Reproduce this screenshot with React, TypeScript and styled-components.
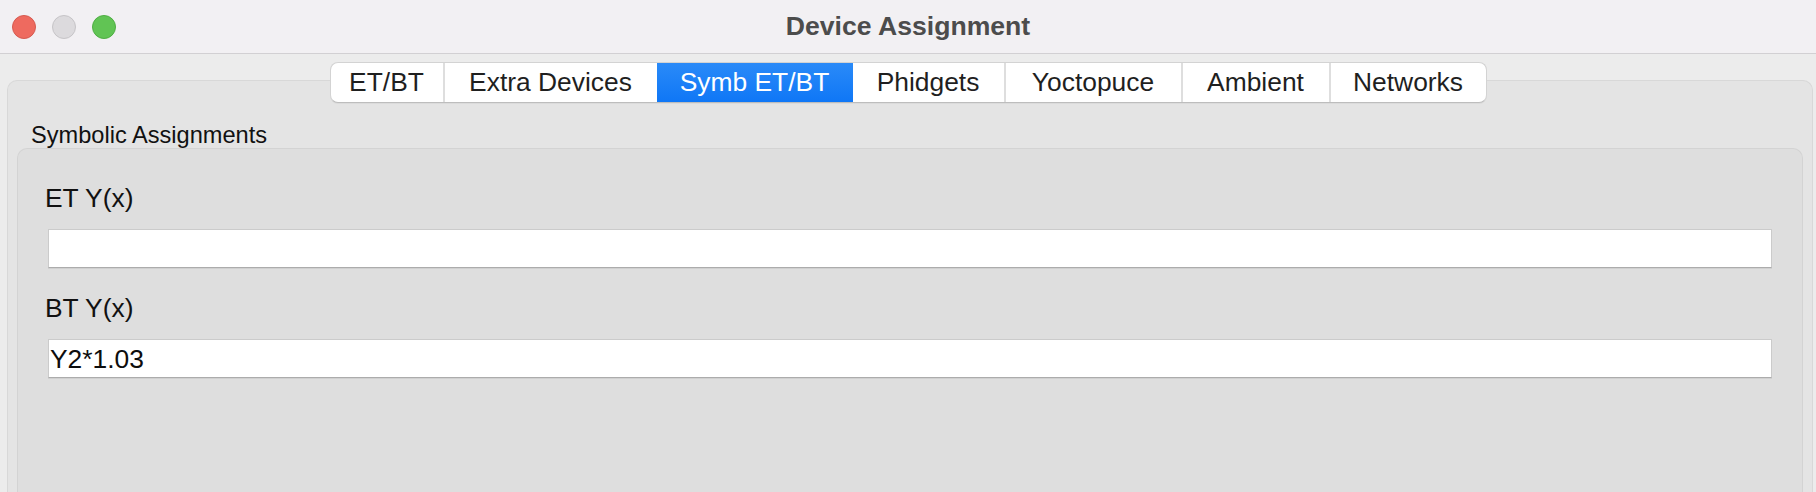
import React from "react";
import styled, { createGlobalStyle } from "styled-components";

const Global = createGlobalStyle`
  html, body { margin: 0; padding: 0; }
  body {
    background: #ececec;
    font-family: "Liberation Sans", Arial, sans-serif;
    overflow: hidden;
  }
`;

const Window = styled.div`
  display: flex;
  flex-direction: column;
  width: 1816px;
  height: 492px;
  background: #ececec;
  overflow: hidden;
`;

const TitleBar = styled.div`
  display: grid;
  grid-template-columns: 1fr auto 1fr;
  align-items: center;
  height: 53px;
  background: #f2f0f3;
  border-bottom: 1px solid #d2d0d3;
  flex-shrink: 0;
`;

const Lights = styled.div`
  display: flex;
  gap: 16px;
  padding-left: 12px;
`;

const Light = styled.span<{ $bg: string; $border: string }>`
  width: 24px;
  height: 24px;
  border-radius: 50%;
  box-sizing: border-box;
  background: ${(p) => p.$bg};
  border: 1px solid ${(p) => p.$border};
`;

const Title = styled.div`
  font-size: 26.6px;
  font-weight: 700;
  color: #4c4c4c;
`;

const TabRow = styled.div`
  display: flex;
  justify-content: center;
  margin-top: 8px;
  position: relative;
  z-index: 1;
  flex-shrink: 0;
`;

const TabBar = styled.div`
  display: flex;
  height: 41px;
  box-sizing: border-box;
  background: #ffffff;
  border: 1px solid #d3d3d3;
  border-bottom-color: #bdbdbd;
  border-radius: 8px;
  overflow: hidden;
  box-shadow: 0 1px 0 rgba(0, 0, 0, 0.04);
`;

const Tab = styled.div<{ $w: number; $active?: boolean; $first?: boolean }>`
  display: flex;
  align-items: center;
  justify-content: center;
  box-sizing: border-box;
  width: ${(p) => p.$w}px;
  font-size: 26.4px;
  color: ${(p) => (p.$active ? "#ffffff" : "#1f1f1f")};
  background: ${(p) =>
    p.$active ? "linear-gradient(#2a8af8, #0f77f6)" : "transparent"};
  border-left: ${(p) =>
    p.$first || p.$active ? "none" : "2px solid #dedede"};
`;

const Pane = styled.div`
  flex: 1;
  margin: -23px 3px 0 7px;
  padding: 41px 9px 0 9px;
  background: #e4e4e4;
  border: 1px solid #d8d8d8;
  border-bottom: none;
  border-radius: 10px 10px 0 0;
  display: flex;
  flex-direction: column;
`;

const GroupTitle = styled.div`
  font-size: 23.6px;
  line-height: 26px;
  color: #111111;
  margin-left: 14px;
`;

const Group = styled.div`
  flex: 1;
  background: #dedede;
  border: 1px solid #d3d3d3;
  border-bottom: none;
  border-radius: 10px 10px 0 0;
  padding: 34px 30px 0 30px;
  display: flex;
  flex-direction: column;
`;

const FieldLabel = styled.div<{ $top?: number }>`
  font-size: 26.4px;
  line-height: 30px;
  color: #111111;
  margin-left: -3px;
  margin-top: ${(p) => p.$top ?? 0}px;
`;

const Input = styled.div`
  margin-top: 16px;
  height: 39px;
  box-sizing: border-box;
  background: #ffffff;
  border: 1px solid #cbcbcb;
  border-bottom-color: #acacac;
  box-shadow: 0 1px 0 rgba(0, 0, 0, 0.06);
  font-size: 26.4px;
  line-height: 37px;
  padding: 1px 0 0 1px;
  color: #0d0d0d;
`;

const tabs = [
  { label: "ET/BT", w: 112 },
  { label: "Extra Devices", w: 214 },
  { label: "Symb ET/BT", w: 196, active: true },
  { label: "Phidgets", w: 151 },
  { label: "Yoctopuce", w: 177 },
  { label: "Ambient", w: 148 },
  { label: "Networks", w: 157 },
];

export default function App() {
  return (
    <>
      <Global />
      <Window>
        <TitleBar>
          <Lights>
            <Light $bg="#ee6a5f" $border="#d65a50" />
            <Light $bg="#dcdadd" $border="#c6c4c7" />
            <Light $bg="#61c454" $border="#4fae43" />
          </Lights>
          <Title>Device Assignment</Title>
          <div />
        </TitleBar>
        <TabRow>
          <TabBar>
            {tabs.map((t, i) => (
              <Tab
                key={t.label}
                $w={t.w}
                $active={t.active}
                $first={i === 0 || (i > 0 && tabs[i - 1].active)}
              >
                {t.label}
              </Tab>
            ))}
          </TabBar>
        </TabRow>
        <Pane>
          <GroupTitle>Symbolic Assignments</GroupTitle>
          <Group>
            <FieldLabel>ET Y(x)</FieldLabel>
            <Input />
            <FieldLabel $top={25}>BT Y(x)</FieldLabel>
            <Input>Y2*1.03</Input>
          </Group>
        </Pane>
      </Window>
    </>
  );
}
